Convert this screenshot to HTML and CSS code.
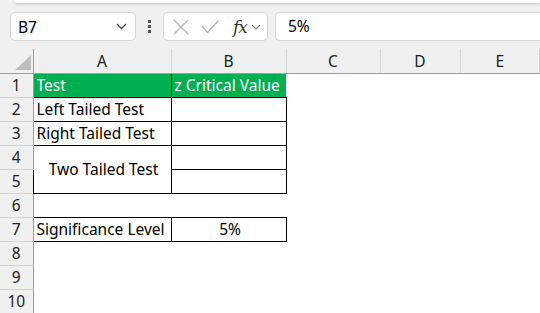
FILE: index.html
```html
<!DOCTYPE html>
<html lang="en">

<head>
    <meta charset="UTF-8">
    <title>z Critical Value</title>
    <link rel="stylesheet" href="styles.css">
</head>

<body>
    <div class="ribbon-edge"></div>

    <!--formül çubuğu-->
    <div class="formula-bar">
        <div class="name-box">
            <span>B7</span>
            <svg class="chev" width="11" height="7" viewBox="0 0 11 7"><path d="M1 1l4.5 4.5L10 1" fill="none" stroke="#444" stroke-width="1.3"/></svg>
        </div>
        <div class="dots"><i></i><i></i><i></i></div>
        <div class="fn-box">
            <svg width="16" height="16" viewBox="0 0 16 16"><path d="M1 1l14 14M15 1L1 15" stroke="#b4b4b4" stroke-width="1.3"/></svg>
            <svg width="18" height="14" viewBox="0 0 18 14"><path d="M1 6l5.5 6.5L17 1" fill="none" stroke="#b4b4b4" stroke-width="1.3"/></svg>
            <span class="fx">fx</span>
            <svg width="10" height="6" viewBox="0 0 10 6"><path d="M1 1l4 4 4-4" fill="none" stroke="#777" stroke-width="1.1"/></svg>
        </div>
        <div class="input-box">5%</div>
    </div>

    <!--sayfa-->
    <table class="sheet">
        <colgroup>
            <col class="c-head">
            <col class="c-a">
            <col class="c-b">
            <col class="c-c">
            <col class="c-d">
            <col class="c-e">
        </colgroup>
        <tr class="col-heads">
            <th class="corner"><div class="tri"></div></th>
            <th>A</th>
            <th>B</th>
            <th>C</th>
            <th>D</th>
            <th>E</th>
        </tr>
        <tr>
            <th>1</th>
            <td class="green">Test</td>
            <td class="green gl">z Critical Value</td>
            <td></td><td></td><td></td>
        </tr>
        <tr>
            <th>2</th>
            <td class="box">Left Tailed Test</td>
            <td class="box"></td>
            <td></td><td></td><td></td>
        </tr>
        <tr>
            <th>3</th>
            <td class="box">Right Tailed Test</td>
            <td class="box"></td>
            <td></td><td></td><td></td>
        </tr>
        <tr>
            <th>4</th>
            <td class="box center" rowspan="2">Two Tailed Test</td>
            <td class="box"></td>
            <td></td><td></td><td></td>
        </tr>
        <tr>
            <th>5</th>
            <td class="box"></td>
            <td></td><td></td><td></td>
        </tr>
        <tr>
            <th>6</th>
            <td></td><td></td><td></td><td></td><td></td>
        </tr>
        <tr>
            <th>7</th>
            <td class="box">Significance Level</td>
            <td class="box center">5%</td>
            <td></td><td></td><td></td>
        </tr>
        <tr>
            <th>8</th>
            <td></td><td></td><td></td><td></td><td></td>
        </tr>
        <tr>
            <th>9</th>
            <td></td><td></td><td></td><td></td><td></td>
        </tr>
        <tr>
            <th>10</th>
            <td></td><td></td><td></td><td></td><td></td>
        </tr>
    </table>
</body>

</html>
```

FILE: styles.css
```css
body {
    margin: 0;
    background-color: #f0f0f0;
    font-family: "Noto Sans", "Open Sans", sans-serif;
    color: #000;
    overflow: hidden;
}

/*üstteki şeridin alt kenarı*/
.ribbon-edge {
    height: 3px;
    margin-left: 14px;
    background-color: #fff;
    border-bottom-left-radius: 6px;
    box-shadow: 0 1px 3px rgba(0, 0, 0, 0.18);
}

.formula-bar {
    display: flex;
    align-items: center;
    height: 29px;
    margin: 9px 0 8px 10px;
}

.name-box {
    box-sizing: border-box;
    width: 126px;
    height: 29px;
    display: flex;
    align-items: center;
    justify-content: space-between;
    padding: 0 8px 0 7px;
    background-color: #fff;
    border: 1px solid #d6d6d6;
    border-radius: 5px;
    font-size: 15.5px;
}

.dots {
    width: 27px;
    display: flex;
    flex-direction: column;
    align-items: center;
    gap: 2px;
}

.dots i {
    width: 3px;
    height: 3px;
    background-color: #555;
}

.fn-box {
    box-sizing: border-box;
    width: 105px;
    height: 29px;
    display: flex;
    align-items: center;
    padding-left: 9px;
    background-color: #fff;
    border: 1px solid #d6d6d6;
    border-radius: 5px;
}

.fn-box svg:nth-child(2) {
    margin-left: 12px;
}

.fx {
    margin-left: 14px;
    margin-right: 4px;
    font-family: "DejaVu Serif", "Liberation Serif", serif;
    font-style: italic;
    font-size: 17px;
    color: #333;
    letter-spacing: -1px;
}

.input-box {
    box-sizing: border-box;
    flex: 1;
    height: 29px;
    margin-left: 7px;
    padding-left: 12px;
    line-height: 27px;
    background-color: #fff;
    border: 1px solid #d6d6d6;
    border-right: none;
    border-radius: 5px 0 0 5px;
    font-size: 15.5px;
}

/*tablo*/
.sheet {
    border-collapse: collapse;
    table-layout: fixed;
    width: 100%;
    background-color: #fff;
    font-size: 15.5px;
}

.c-head { width: 33px; }
.c-a { width: 138px; }
.c-b { width: 115px; }
.c-c { width: 94px; }
.c-d { width: 80px; }

.sheet tr {
    height: 24px;
}

.sheet td {
    padding: 0 0 0 3px;
    height: 23px;
    line-height: 22px;
    white-space: nowrap;
    overflow: hidden;
}

.sheet th {
    font-weight: normal;
    background-color: #f0f0f0;
    color: #222;
    padding: 0;
    border-right: 1px solid #9e9e9e;
    border-bottom: 1px solid #d4d4d4;
}

.col-heads th {
    height: 22px;
    border-right: 1px solid #d4d4d4;
    border-bottom: 1px solid #9e9e9e;
}

.col-heads th.corner {
    border-right: 1px solid #9e9e9e;
    position: relative;
}

.tri {
    position: absolute;
    right: 2px;
    bottom: 3px;
    width: 0;
    height: 0;
    border-left: 16px solid transparent;
    border-bottom: 15px solid #bdbdbd;
}

.green {
    background-color: #00b050;
    color: #fff;
}

.green.gl {
    border-left: 1px solid #000;
}

.box {
    border: 1px solid #000;
}

.center {
    text-align: center;
    padding: 0;
}
```
